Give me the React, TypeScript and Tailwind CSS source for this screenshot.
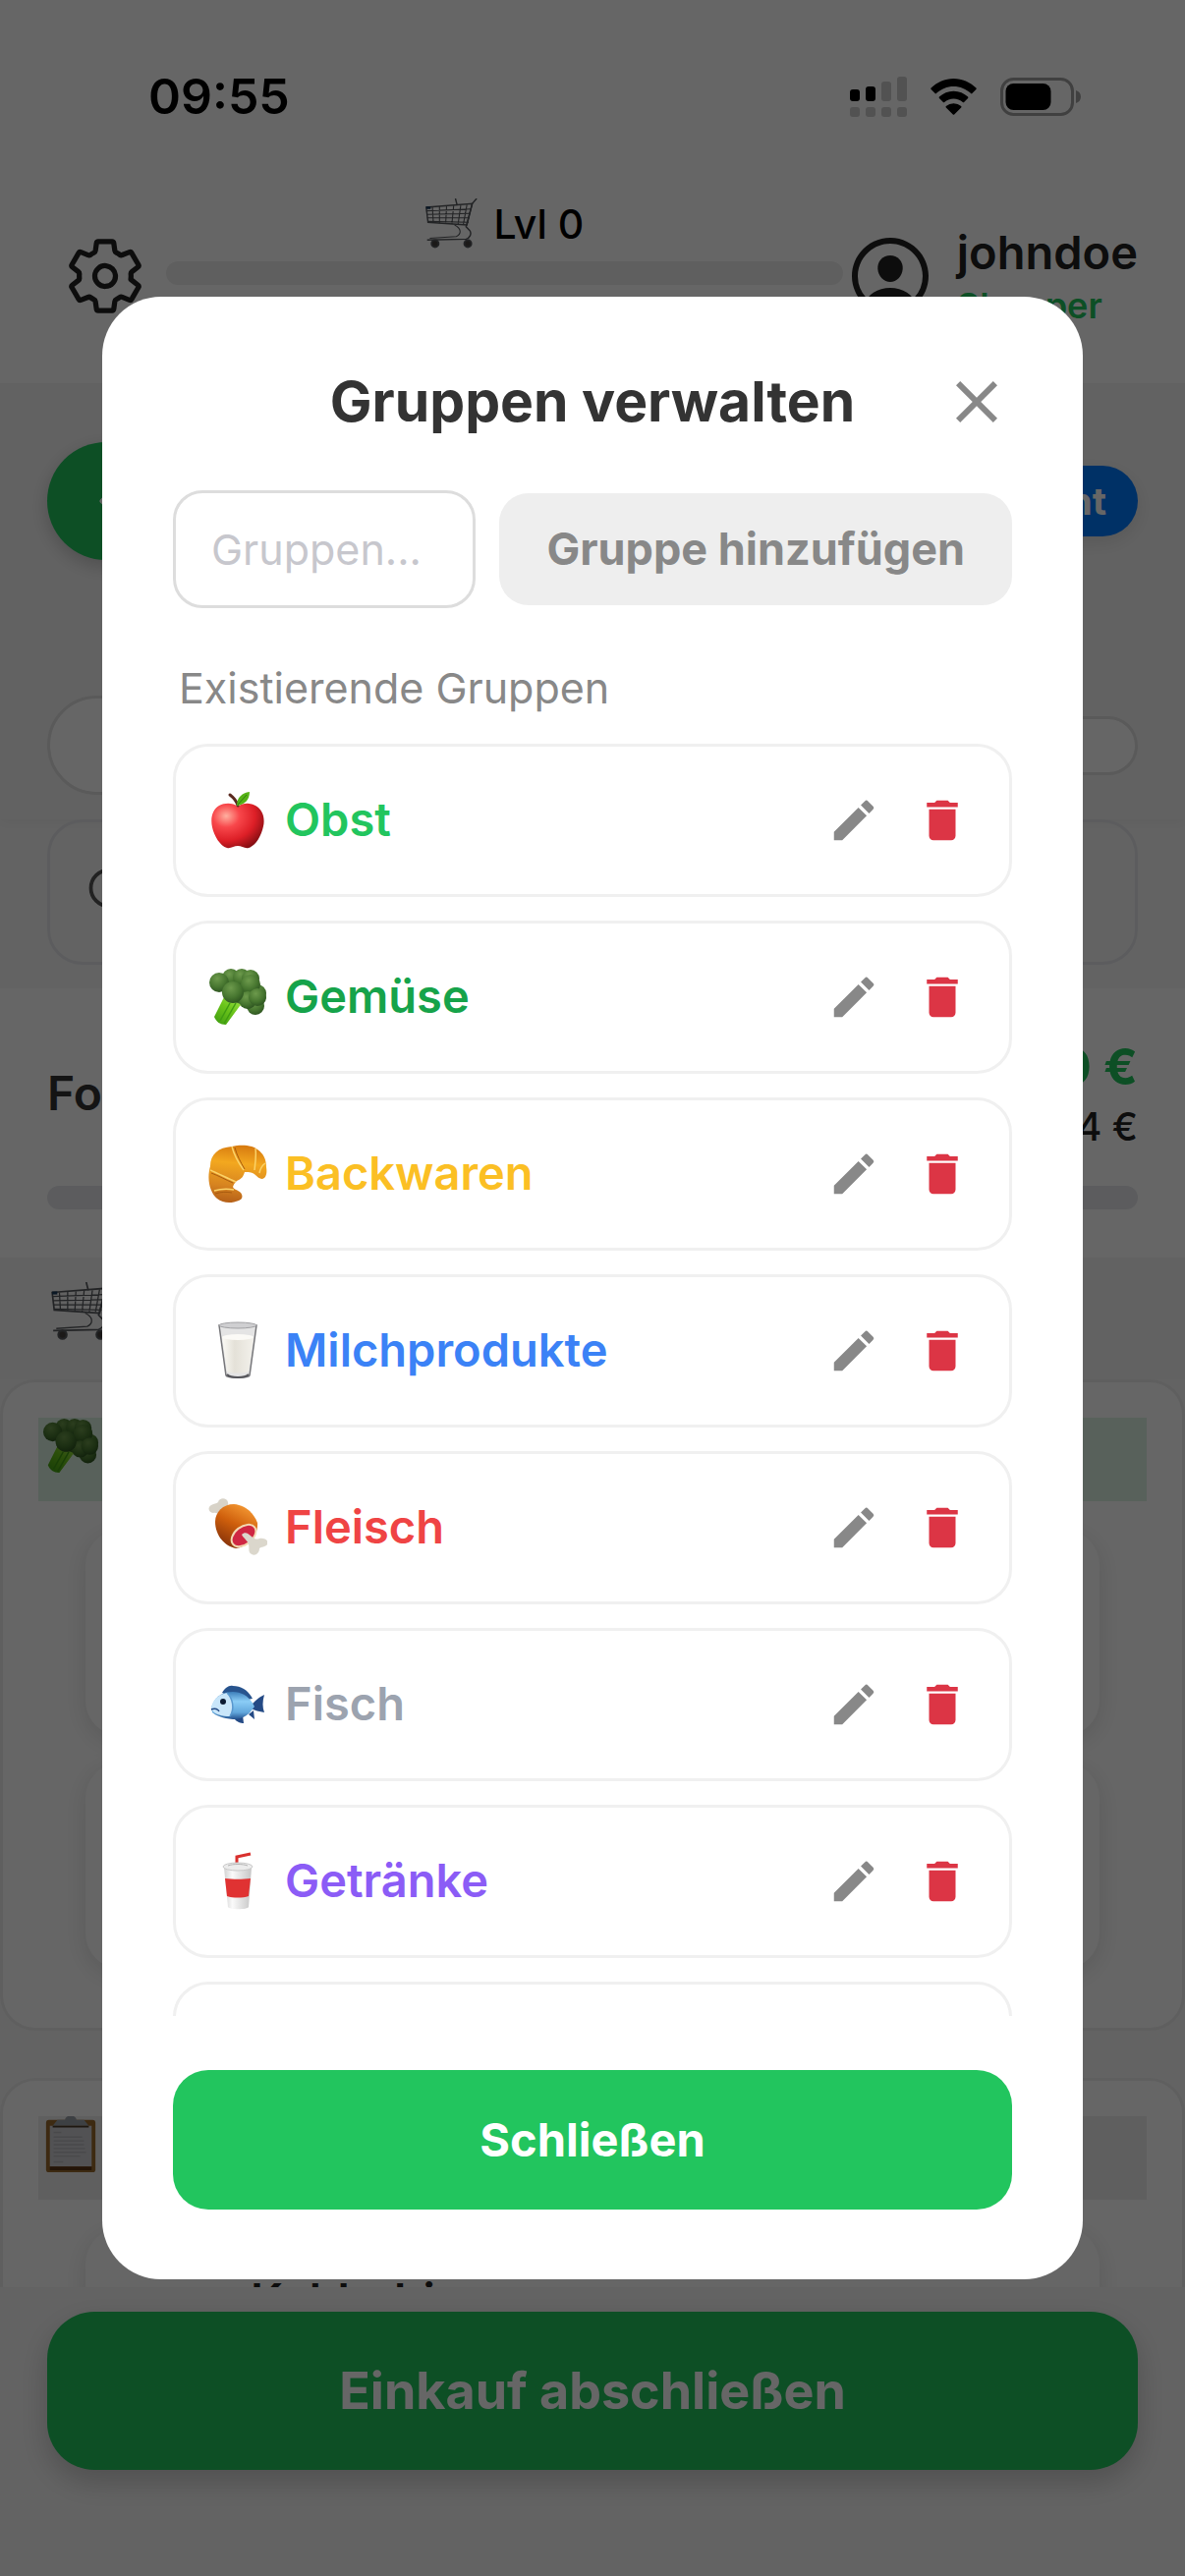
import type { ReactNode } from "react";
import {
  IoChevronBack,
  IoPersonCircleOutline,
  IoSearchOutline,
  IoSettingsOutline,
} from "react-icons/io5";
import { MdClose, MdDelete, MdEdit } from "react-icons/md";

function Apple() {
  return (
    <svg viewBox="0 0 60 60" className="size-full">
      <defs>
        <radialGradient id="apple" cx="0.28" cy="0.28" r="0.85">
          <stop offset="0" stopColor="#ffb0a0" />
          <stop offset="0.3" stopColor="#f8474b" />
          <stop offset="0.65" stopColor="#dd1f27" />
          <stop offset="1" stopColor="#7a0c10" />
        </radialGradient>
      </defs>
      <path
        d="M30 16c5-4 13-4 18-1 7 4 10 12 8 21-2 10-8 20-15 22-4 1-7-2-11-2s-7 3-11 2C12 56 6 46 4 37 2 28 4 19 11 15c6-3 14-3 19 1z"
        fill="url(#apple)"
      />
      <path d="M30 15c-1-4-4-8-8-11" stroke="#5b2a20" strokeWidth="3" strokeLinecap="round" fill="none" />
      <path d="M29 15C29 7 34 2 42 1c0 8-5 13-13 14z" fill="#55b216" />
      <path d="M30 14l9-10" stroke="#2f7d0c" strokeWidth="1" />
    </svg>
  );
}

function Broccoli() {
  return (
    <svg viewBox="0 0 60 60" className="size-full">
      <defs>
        <linearGradient id="stem" x1="1" y1="0" x2="0" y2="1">
          <stop offset="0" stopColor="#b6ec5f" />
          <stop offset="0.5" stopColor="#6cc51b" />
          <stop offset="1" stopColor="#3c9a10" />
        </linearGradient>
        <radialGradient id="floret" cx="0.4" cy="0.3" r="0.75">
          <stop offset="0" stopColor="#6d9a4c" />
          <stop offset="0.6" stopColor="#46752f" />
          <stop offset="1" stopColor="#2b511f" />
        </radialGradient>
      </defs>
      <path d="M16 30L6 50c2 5 6 8 12 8l14-19 10-6z" fill="url(#stem)" />
      <path d="M22 36L12 54M28 36L16 57" stroke="#3f9c12" strokeWidth="1.5" />
      <path d="M12 8l30-4 14 20-4 18-16-4-18-6-6-12z" fill="#3d692a" />
      <g fill="url(#floret)">
        <circle cx="23" cy="10" r="9" />
        <circle cx="34" cy="10" r="9" />
        <circle cx="43" cy="11" r="9" />
        <circle cx="11" cy="15" r="10" />
        <circle cx="50" cy="26" r="9" />
        <circle cx="43" cy="17" r="10" />
        <circle cx="48" cy="39" r="9" />
        <circle cx="40" cy="33" r="9" />
        <circle cx="25" cy="25" r="11" />
        <circle cx="50" cy="30" r="9" />
      </g>
    </svg>
  );
}

function Croissant() {
  return (
    <svg viewBox="0 0 60 60" className="size-full">
      <defs>
        <linearGradient id="crust" x1="0.4" y1="0" x2="0.3" y2="1">
          <stop offset="0" stopColor="#d87c10" />
          <stop offset="0.3" stopColor="#f3a81f" />
          <stop offset="0.7" stopColor="#d78420" />
          <stop offset="1" stopColor="#b45f18" />
        </linearGradient>
      </defs>
      <path
        d="M2 22C2 10 10 3 24 2c8-2 20-2 26 3 6 4 9 10 9 18 1 6 0 11-4 12-4 0-6-4-10-6-3-1-5-1-8-1-1 3-2 6-6 8-3 1-5 4-6 7 1 3 5 3 8 6 3 4 1 7-2 8-7 3-16 3-22-2C2 49-2 36 2 22z"
        fill="url(#crust)"
      />
      <path
        d="M24 2c2 8 7 17 12 24M48 4c1 7 0 14-1 22M2 26c9 4 17 8 26 12M6 47c7-2 14-2 20-1M58 19c-3 2-5 5-6 10"
        stroke="#fbd268"
        strokeWidth="1.5"
        fill="none"
      />
      <path
        d="M27 3c2 8 6 15 10 22M3 29c8 3 15 7 22 10M7 50c6-2 12-2 17-1"
        stroke="#a95c10"
        strokeWidth="1"
        fill="none"
      />
    </svg>
  );
}

function Milk() {
  return (
    <svg viewBox="0 0 60 60" className="size-full">
      <defs>
        <linearGradient id="milk" x1="0" y1="0" x2="1" y2="0">
          <stop offset="0" stopColor="#fbfaf5" />
          <stop offset="0.4" stopColor="#e4e1d8" />
          <stop offset="1" stopColor="#f3f1eb" />
        </linearGradient>
      </defs>
      <path d="M11 4l7 51c1 3 23 3 24 0l7-51z" fill="#e4e4e4" stroke="#77777a" strokeWidth="1.5" />
      <path d="M14 16c4-3 28-3 32 0l-5 35c-4 2-18 2-22 0z" fill="url(#milk)" />
      <ellipse cx="30" cy="16" rx="16" ry="3" fill="#fbfaf6" />
      <ellipse cx="30" cy="4" rx="19" ry="3" fill="#cfcfd1" stroke="#a1a1a4" strokeWidth="1" />
      <path d="M19 54c4 4 18 4 22 0" stroke="#55555a" strokeWidth="2" fill="none" />
    </svg>
  );
}

function Meat() {
  return (
    <svg viewBox="0 0 60 60" className="size-full">
      <defs>
        <linearGradient id="meat" x1="0.7" y1="0" x2="0.2" y2="1">
          <stop offset="0" stopColor="#f59a34" />
          <stop offset="0.45" stopColor="#cf5f0c" />
          <stop offset="1" stopColor="#7e2d09" />
        </linearGradient>
      </defs>
      <path d="M12 16c-3 0-4-2-7-1-5 0-6-6-2-8 3-2 5-1 7-3 1-5 9-5 10 0 1 5-2 7-1 11z" fill="#d8d3c8" />
      <path
        d="M7 24C7 14 15 6 26 6c11 1 20 8 24 19 1 12-8 24-22 26C17 49 7 38 7 24z"
        fill="url(#meat)"
      />
      <ellipse cx="36" cy="38" rx="15" ry="10" transform="rotate(-38 36 38)" fill="#f3d9b2" />
      <ellipse cx="36" cy="38" rx="13" ry="8" transform="rotate(-38 36 38)" fill="#cf2743" />
      <path
        d="M34 37c3-3 6-2 10 2 4 3 5 3 8 2 5-1 10 2 8 6-2 3-6 2-8 4 0 5-4 8-8 6-4-2-2-7-3-10-1-4-5-6-7-10z"
        fill="#dbd7cc"
      />
    </svg>
  );
}

function Fish() {
  return (
    <svg viewBox="0 0 60 60" className="size-full">
      <defs>
        <linearGradient id="fish" x1="0" y1="0" x2="0" y2="1">
          <stop offset="0" stopColor="#3d7fbb" />
          <stop offset="0.35" stopColor="#8bcdf6" />
          <stop offset="0.75" stopColor="#62a7dc" />
          <stop offset="1" stopColor="#24528f" />
        </linearGradient>
      </defs>
      <path d="M14 18c3-5 7-8 11-7 9 0 16 5 20 13l-12 2z" fill="#28548e" />
      <path d="M43 31c4-4 9-9 14-11-2 7-2 13 0 18-5-1-10-2-14-4z" fill="#244a85" />
      <path d="M26 44c3 4 7 5 10 5l-1-8zM41 40l6 5-1-9z" fill="#244a85" />
      <path d="M3 33c3-10 10-16 22-16 11 0 18 7 22 15-5 8-12 13-22 13-10-1-18-4-21-7z" fill="url(#fish)" />
      <path d="M3 33c2-8 7-13 16-15 6 6 8 16 3 24-8 0-15-2-18-6z" fill="#c9e6fa" />
      <path d="M19 18c6 6 8 16 3 24" stroke="#5998cf" strokeWidth="1.5" fill="none" />
      <path d="M3 35c4-2 7 0 8 2" stroke="#244a85" strokeWidth="1.5" fill="none" />
      <circle cx="15" cy="27" r="3" fill="#0d1c33" />
    </svg>
  );
}

function Cup() {
  return (
    <svg viewBox="0 0 60 60" className="size-full">
      <defs>
        <linearGradient id="cup" x1="0" y1="0" x2="1" y2="0">
          <stop offset="0" stopColor="#d2d2d2" />
          <stop offset="0.3" stopColor="#fafafa" />
          <stop offset="1" stopColor="#c6c6c6" />
        </linearGradient>
      </defs>
      <path d="M29 14V5l14-3" stroke="#d9302e" strokeWidth="3" fill="none" />
      <path d="M16 16l4 40c1 3 20 3 21 0l3-40z" fill="url(#cup)" />
      <path d="M17 27c8 1 18 1 26 0l-2 18c-6 2-16 2-22 0z" fill="#e03232" />
      <ellipse cx="30" cy="15" rx="15" ry="4" fill="#ececec" stroke="#c9c9c9" strokeWidth="1" />
      <path d="M20 14c5-2 15-2 20 0" stroke="#b5b5b5" strokeWidth="1" fill="none" />
    </svg>
  );
}

function Cart() {
  return (
    <svg viewBox="0 0 60 60" className="size-full" fill="none" stroke="#55585c" strokeWidth="1.2">
      <path d="M2 10l52-4-6 24-44-3z" strokeWidth="1.6" />
      <path d="M2 14l51-2M3 18l49-1M3 22l48 0M4 26l46 1M9 10l1 17M17 9l0 19M25 9l-1 19M33 8l-2 21M41 8l-3 21M48 7l-4 22" />
      <path d="M35 0l2 8M59 0l-5 6-7 26 4 4c3 4 0 9-4 10L3 47" strokeWidth="1.6" />
      <path d="M34 30c8 4 8 10 2 13L6 45" />
      <circle cx="12" cy="51" r="4" fill="#44403e" strokeWidth="2" />
      <circle cx="49" cy="51" r="4" fill="#44403e" strokeWidth="2" />
      <path d="M2 9h5v3H2z" fill="#1d3c5c" stroke="none" />
    </svg>
  );
}

function Clipboard() {
  return (
    <svg viewBox="0 0 60 60" className="size-full">
      <rect x="4" y="4" width="52" height="55" rx="3" fill="#9a6a2e" />
      <path d="M8 10h44v43H8z" fill="#cdcdd1" />
      <path d="M8 53h44v4H8z" fill="#5b3518" />
      <path
        d="M12 17h8M12 22h30M12 26h32M12 30h32M12 34h33M12 38h34M12 42h28M12 48h10"
        stroke="#b6b6bb"
        strokeWidth="1.5"
      />
      <path d="M11 10l5-6h8c0-6 12-6 12 0h8l5 6z" fill="#9aa0a8" />
      <path d="M11 10h38v2H11z" fill="#4b3a2a" />
    </svg>
  );
}

const groups = [
  { name: "Obst", color: "text-[#22c55e]", icon: <Apple /> },
  { name: "Gemüse", color: "text-[#16a34a]", icon: <Broccoli /> },
  { name: "Backwaren", color: "text-[#fbbf24]", icon: <Croissant /> },
  { name: "Milchprodukte", color: "text-[#3b82f6]", icon: <Milk /> },
  { name: "Fleisch", color: "text-[#ef4444]", icon: <Meat /> },
  { name: "Fisch", color: "text-[#9ca3af]", icon: <Fish /> },
  { name: "Getränke", color: "text-[#8b5cf6]", icon: <Cup /> },
];

function StatusBar() {
  return (
    <div className="flex h-[196px] items-center justify-between pr-[106px] pl-[151px]">
      <span className="text-[50px] font-semibold text-black">09:55</span>
      <div className="flex items-center gap-[22px]">
        <svg viewBox="0 0 58 41" className="h-[41px] w-[58px]">
          <rect x="0" y="13" width="10" height="12" rx="3" />
          <rect x="16" y="10" width="10" height="15" rx="3" />
          <g fill="#cccccc">
            <rect x="32" y="5" width="10" height="20" rx="3" />
            <rect x="48" y="0" width="10" height="25" rx="3" />
            <rect x="0" y="31" width="10" height="10" rx="3" />
            <rect x="16" y="31" width="10" height="10" rx="3" />
            <rect x="32" y="31" width="10" height="10" rx="3" />
            <rect x="48" y="31" width="10" height="10" rx="3" />
          </g>
        </svg>
        <svg viewBox="0 0 51 37" className="h-[37px] w-[51px]">
          <path d="M25.500 8c6.800 0 13 2.700 17.600 7.100.4.400 1 .4 1.300 0l4-4c.5-.5.4-1.100 0-1.500C42.300 3.700 34.300 0 25.500 0S8.700 3.700 2.600 9.600c-.4.400-.5 1 0 1.500l4 4c.3.400.9.400 1.300 0C12.500 10.700 18.700 8 25.500 8z" />
          <path d="M25.500 20.500c3.600 0 6.800 1.300 9.300 3.500.4.300.9.300 1.300 0l4-4c.4-.4.4-1 0-1.400-3.900-3.600-9-5.800-14.600-5.800s-10.700 2.200-14.600 5.800c-.4.400-.4 1 0 1.400l4 4c.4.300.9.300 1.300 0 2.500-2.200 5.700-3.500 9.300-3.500z" />
          <path d="M33.200 28.100c.4.400.4.900 0 1.300l-7 7.100c-.4.400-1 .4-1.400 0l-7-7.100c-.4-.4-.4-.9 0-1.300a12 12 0 0 1 15.400 0z" />
        </svg>
        <svg viewBox="0 0 82 39" className="h-[39px] w-[82px]">
          <rect x="1.500" y="1.500" width="72" height="36" rx="12" fill="none" stroke="#a0a0a0" strokeWidth="3" />
          <path d="M77 13c3 1 5 3 5 6.500s-2 5.500-5 6.500z" fill="#a0a0a0" />
          <rect x="5.500" y="6" width="46" height="27" rx="8" />
        </svg>
      </div>
    </div>
  );
}

function Header() {
  return (
    <header className="shrink-0 bg-white pb-[30px]">
      <StatusBar />
      <div className="flex items-center pt-1.5 pr-12 pl-[65px]">
        <button aria-label="Einstellungen" className="mr-5 text-[#222222]">
          <IoSettingsOutline className="size-[84px]" />
        </button>
        <div className="flex flex-1 flex-col gap-[10px] pb-[70px]">
          <div className="flex h-[54px] items-center justify-center gap-4">
            <span className="size-[54px]">
              <Cart />
            </span>
            <span className="text-[41px] font-medium text-black">Lvl 0</span>
          </div>
          <div className="h-6 rounded-full bg-[#eeeeee]" />
        </div>
        <IoPersonCircleOutline className="size-24 text-[#222222]" />
        <div className="ml-5 flex flex-col gap-1">
          <span className="text-[47px] leading-[56px] font-semibold text-[#222222]">johndoe</span>
          <span className="text-[36px] leading-[44px] font-semibold text-[#22c55e]">Shopper</span>
        </div>
      </div>
    </header>
  );
}

function ListCard({ icon, tint, children }: { icon: ReactNode; tint: string; children: ReactNode }) {
  return (
    <section className="rounded-[36px] border-[3px] border-[#eeeeee] bg-white px-9 pt-9 pb-[60px]">
      <div className={`h-[85px] px-1 ${tint}`}>
        <div className="size-[58px]">{icon}</div>
      </div>
      <div className="mx-12 mt-[29px] flex flex-col gap-[27px]">{children}</div>
    </section>
  );
}

function Product({ name }: { name?: string }) {
  return (
    <div className="h-[210px] rounded-[36px] bg-white px-[168px] pt-[38px] text-[47px] font-semibold text-[#222222] shadow-[0_6px_24px_rgba(0,0,0,0.12)]">
      {name}
    </div>
  );
}

function ShoppingPage() {
  return (
    <div className="flex h-screen flex-col overflow-hidden bg-[#f8f8f8]">
      <Header />
      <main className="min-h-0 flex-1 overflow-hidden">
        <div className="bg-[#f5f5f5] px-12 pt-[60px] pb-[25px] shadow-[0_3px_12px_rgba(0,0,0,0.05)]">
          <div className="flex items-center justify-between">
            <button
              aria-label="Zurück"
              className="flex h-[120px] w-[180px] items-center rounded-full bg-[#22c55e] pl-9 text-white shadow-[0_6px_18px_rgba(0,0,0,0.2)]"
            >
              <IoChevronBack className="size-14" />
            </button>
            <button className="h-[72px] rounded-full bg-[#007aff] px-8 text-[39px] font-bold text-white shadow-[0_6px_18px_rgba(0,0,0,0.1)]">
              Sortiment
            </button>
          </div>
          <div className="mt-[138px] flex items-center justify-between">
            <div className="h-[101px] w-[400px] rounded-full border-[3px] border-[#e0e0e0] bg-white" />
            <div className="h-[60px] w-[300px] rounded-full border-[3px] border-[#e0e0e0] bg-white" />
          </div>
        </div>
        <div className="px-12 pb-6">
          <div className="flex h-[148px] items-center rounded-[36px] border-[3px] border-[#e5e7eb] pl-[34px]">
            <IoSearchOutline className="size-[60px] text-[#555555]" />
          </div>
        </div>
        <div className="bg-white px-12 pt-12 pb-[49px]">
          <div className="flex items-center justify-between">
            <span className="text-[48px] font-semibold text-[#333333]">Fortschritt</span>
            <div className="flex flex-col gap-1 text-right">
              <span className="text-[51px] leading-[64px] font-bold text-[#22c55e]">0,00 €</span>
              <span className="text-[39px] leading-[50px] font-medium text-[#222222]">12,34 €</span>
            </div>
          </div>
          <div className="mt-[35px] h-6 rounded-full bg-[#e5e7eb]" />
        </div>
        <div className="h-[124px] bg-[#f5f5f5] px-[51px] pt-[25px]">
          <div className="size-[63px]">
            <Cart />
          </div>
        </div>
        <div className="flex flex-col gap-12">
          <ListCard icon={<Broccoli />} tint="bg-[#dcf3e4]">
            <Product />
            <Product />
          </ListCard>
          <ListCard icon={<Clipboard />} tint="bg-[#eeeeee]">
            <Product name="Kohlrabi" />
          </ListCard>
        </div>
      </main>
      <footer className="shrink-0 px-12 pt-[25px] pb-[108px]">
        <button className="h-[161px] w-full rounded-[48px] bg-[#22c55e] text-[52px] font-bold text-white shadow-[0_12px_30px_rgba(0,0,0,0.2)]">
          Einkauf abschließen
        </button>
      </footer>
    </div>
  );
}

function GroupRow({ name, color, icon }: { name: string; color: string; icon: ReactNode }) {
  return (
    <li className="flex h-[156px] shrink-0 items-center rounded-[36px] border-[3px] border-[#f0f0f0] pr-[41px] pl-[33px]">
      <span className="size-[60px]">{icon}</span>
      <span className={`ml-[18px] flex-1 text-[47px] font-semibold ${color}`}>{name}</span>
      <button aria-label={`${name} bearbeiten`} className="text-[#888888]">
        <MdEdit className="size-[54px]" />
      </button>
      <button aria-label={`${name} löschen`} className="ml-9 text-[#dc3545]">
        <MdDelete className="size-[54px]" />
      </button>
    </li>
  );
}

function GroupsDialog() {
  return (
    <div className="fixed inset-0 flex items-center bg-black/60 px-[104px]">
      <div
        role="dialog"
        aria-modal="true"
        aria-labelledby="groups-title"
        className="flex h-[77vh] w-full flex-col rounded-[60px] bg-white px-[72px] py-[71px]"
      >
        <div className="relative flex h-[72px] shrink-0 items-center justify-center">
          <h2 id="groups-title" className="text-[57px] font-bold text-[#333333]">
            Gruppen verwalten
          </h2>
          <button aria-label="Dialog schließen" className="absolute right-0 text-[#888888]">
            <MdClose className="size-[72px]" />
          </button>
        </div>
        <div className="mt-[54px] flex shrink-0 items-center gap-6">
          <input
            type="text"
            aria-label="Gruppenname"
            placeholder="Gruppen..."
            className="h-[120px] w-0 flex-1 rounded-[30px] border-[3px] border-[#dddddd] px-9 text-[43px] placeholder:text-[#c7c7cd]"
          />
          <button className="h-[114px] shrink-0 rounded-[30px] bg-[#eeeeee] px-12 text-[45px] font-bold text-[#888888]">
            Gruppe hinzufügen
          </button>
        </div>
        <h3 className="mt-[54px] shrink-0 px-1.5 text-[43px] leading-[54px] text-[#888888]">
          Existierende Gruppen
        </h3>
        <ul className="mt-[30px] flex min-h-0 flex-1 flex-col gap-6 overflow-hidden">
          {groups.map((group) => (
            <GroupRow key={group.name} {...group} />
          ))}
          <li className="h-[156px] shrink-0 rounded-[36px] border-[3px] border-[#f0f0f0]" />
        </ul>
        <button className="mt-[55px] h-[142px] shrink-0 rounded-[36px] bg-[#22c55e] text-[47px] font-bold text-white">
          Schließen
        </button>
      </div>
    </div>
  );
}

export default function App() {
  return (
    <div className="font-['Inter','Noto_Sans',sans-serif]">
      <ShoppingPage />
      <GroupsDialog />
    </div>
  );
}
